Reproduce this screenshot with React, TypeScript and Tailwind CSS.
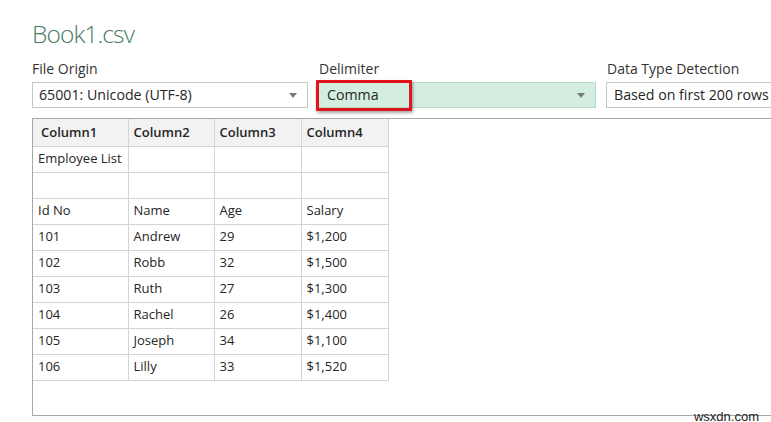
import React from "react";

const rows: string[][] = [
  ["Employee List", "", "", ""],
  ["", "", "", ""],
  ["Id No", "Name", "Age", "Salary"],
  ["101", "Andrew", "29", "$1,200"],
  ["102", "Robb", "32", "$1,500"],
  ["103", "Ruth", "27", "$1,300"],
  ["104", "Rachel", "26", "$1,400"],
  ["105", "Joseph", "34", "$1,100"],
  ["106", "Lilly", "33", "$1,520"],
];

const colWidths = ["w-[95px]", "w-[86px]", "w-[87px]", "w-[87px]"];

function Caret() {
  return (
    <svg width="8" height="5" viewBox="0 0 8 5" className="shrink-0">
      <path d="M0 0h8L4 5z" fill="#7a7a7a" />
    </svg>
  );
}

export default function App() {
  return (
    <div className="relative w-[771px] h-[422px] overflow-hidden bg-white font-['Open_Sans',sans-serif] text-[#262626]">
      <div className="pl-[32px] pt-[17px]">
        <h1 className="text-[24.5px] leading-[33px] font-light text-[#4a7a5f] tracking-[-0.9px]">Book1.csv</h1>

        {/* settings row */}
        <div className="flex mt-[9px] gap-[8px]">
          <div className="flex flex-col w-[276px] shrink-0">
            <span className="text-[14px] leading-[20px] text-[#333]">File Origin</span>
            <div className="mt-[3px] h-[26px] border border-[#c6c6c6] flex items-center justify-between pl-[6px] pr-[10px]">
              <span className="text-[14.2px]">65001: Unicode (UTF-8)</span>
              <Caret />
            </div>
          </div>

          <div className="flex flex-col w-[280px] shrink-0">
            <span className="text-[14px] leading-[20px] text-[#333] pl-[3px]">Delimiter</span>
            <div className="relative mt-[3px] h-[26px] bg-[#d3eee0] border border-[#b4dcc7] flex items-center justify-between pl-[10px] pr-[10px]">
              <span className="text-[14.2px]">Comma</span>
              <Caret />
              <div className="absolute left-[-1px] top-[-3px] w-[96px] h-[31px] border-[3px] border-[#e0141c] shadow-[1px_2px_3px_rgba(0,0,0,0.35)]" />
            </div>
          </div>

          <div className="flex flex-col w-[240px] shrink-0 ml-[2px]">
            <span className="text-[14px] leading-[20px] text-[#333] pl-[1px]">Data Type Detection</span>
            <div className="mt-[3px] h-[26px] border border-[#c6c6c6] flex items-center pl-[7px]">
              <span className="text-[14.2px] whitespace-nowrap">Based on first 200 rows</span>
            </div>
          </div>
        </div>

        {/* preview panel */}
        <div className="mt-[10px] h-[298px] w-[760px] border-l border-t border-b border-[#a8a8a8]">
          <table className="border-collapse text-[13px] font-['Open_Sans',sans-serif]">
            <thead>
              <tr className="h-[27px] bg-[#f2f2f2]">
                {["Column1", "Column2", "Column3", "Column4"].map((c, i) => (
                  <th
                    key={c}
                    className={`${colWidths[i]} ${i === 0 ? "pl-[8px]" : "pl-[5px]"} text-left font-semibold border border-t-0 border-l-0 border-[#d4d4d4] p-0`}
                  >
                    {c}
                  </th>
                ))}
              </tr>
            </thead>
            <tbody>
              {rows.map((r, ri) => (
                <tr key={ri} className="h-[26px]">
                  {r.map((v, ci) => (
                    <td key={ci} className="pl-[5px] p-0 border border-l-0 border-[#d4d4d4] whitespace-nowrap">
                      {v}
                    </td>
                  ))}
                </tr>
              ))}
            </tbody>
          </table>
        </div>
      </div>

      <span className="absolute right-[12px] bottom-[-4px] text-[13px] text-[#222] font-['Liberation_Sans',sans-serif]">wsxdn.com</span>
    </div>
  );
}
